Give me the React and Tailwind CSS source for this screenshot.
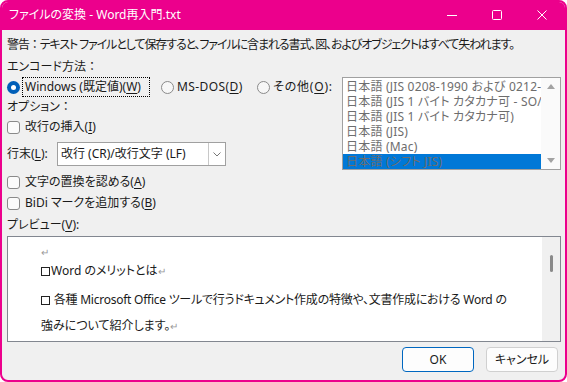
import React from 'react'

const PINK = 'border-[#ec008c]'

function Radio({ checked }) {
  if (checked) {
    return (
      <span className="w-[13px] h-[13px] rounded-full bg-[#005fb8] flex items-center justify-center shrink-0">
        <span className="w-[5px] h-[5px] rounded-full bg-white" />
      </span>
    )
  }
  return <span className="block w-[13px] h-[13px] rounded-full border border-[#8a8a8a] bg-[#f7f7f7] shrink-0" />
}

function Check({ children }) {
  return (
    <div className="flex items-center h-[16px] gap-[5px]">
      <span className="w-[13px] h-[13px] rounded-[3px] border border-[#8a8a8a] bg-[#fbfbfb] shrink-0" />
      <span>{children}</span>
    </div>
  )
}

function Key({ k }) {
  return <span className="underline underline-offset-2">{k}</span>
}

// full-width colon, kept out of the proportional (palt) spacing
function Colon() {
  return <span className="[font-feature-settings:normal]">：</span>
}

function Box() {
  return <span className="inline-block w-[9px] h-[9px] border-[1.5px] border-[#222] mr-[1px] align-[-1px]" />
}

function Ret() {
  return <span className="text-[#9a9a9a] text-[10px]">↵</span>
}

export default function App() {
  const encodings = [
    '日本語 (JIS 0208-1990 および 0212-1990)',
    '日本語 (JIS 1 バイト カタカナ可 - SO/SI)',
    '日本語 (JIS 1 バイト カタカナ可)',
    '日本語 (JIS)',
    '日本語 (Mac)',
    '日本語 (シフト JIS)',
  ]

  return (
    <div className="w-[567px] h-[382px] bg-white font-['Noto_Sans','Noto_Sans_CJK_JP',sans-serif] [font-feature-settings:'palt'] text-[12px] text-[#1a1a1a]">
      <div className={`w-full h-full rounded-[8px] border-2 ${PINK} bg-[#f0f0f0] overflow-hidden flex flex-col`}>
        {/* title bar */}
        <div className="h-[28px] bg-[#ec008c] flex items-center shrink-0">
          <div className="pl-[7px] text-white leading-[16px] mt-[-2px]">ファイルの変換 - Word再入門.txt</div>
          <div className="ml-auto flex h-full pr-[1px] mt-[-2px]">
            <div className="w-[45px] flex items-center justify-center">
              <svg width="10" height="10" viewBox="0 0 10 10"><path d="M0 5.5h10" stroke="white" strokeWidth="1" /></svg>
            </div>
            <div className="w-[45px] flex items-center justify-center">
              <svg width="10" height="10" viewBox="0 0 10 10"><rect x="0.5" y="0.5" width="9" height="9" rx="1" fill="none" stroke="white" strokeWidth="1" /></svg>
            </div>
            <div className="w-[45px] flex items-center justify-center">
              <svg width="10" height="10" viewBox="0 0 10 10"><path d="M0.5 0.5l9 9M9.5 0.5l-9 9" stroke="white" strokeWidth="1" /></svg>
            </div>
          </div>
        </div>

        {/* body */}
        <div className="pl-[5px] pr-[4px] flex flex-col">
          <div className="mt-[7px] h-[16px] leading-[16px] whitespace-nowrap tracking-[-1.1px]">
            警告<Colon />テキスト ファイルとして保存すると、ファイルに含まれる書式、図、およびオブジェクトはすべて失われます。
          </div>
          <div className="mt-[6px] h-[16px] leading-[16px]">エンコード方法<Colon /></div>

          <div className="mt-[2px] flex">
            <div className="flex-1 flex flex-col">
              <div className="h-[20px] flex items-center whitespace-nowrap">
                <Radio checked />
                <span className="ml-[2px] w-[128px] h-[20px] pl-[2px] border border-dotted border-black flex items-center">
                  Windows (既定値)(<Key k="W" />)
                </span>
                <span className="ml-[11px]"><Radio /></span>
                <span className="ml-[3px] w-[80px] tracking-[0.4px]">MS-DOS(<Key k="D" />)</span>
                <span><Radio /></span>
                <span className="ml-[3px] tracking-[0.8px]">その他(<Key k="O" />):</span>
              </div>
              <div className="mt-[2px] h-[16px] leading-[16px]">オプション<Colon /></div>
              <div className="mt-[4px]"><Check>改行の挿入(<Key k="I" />)</Check></div>
              <div className="mt-[7px] flex items-center h-[24px]">
                <span className="w-[50px]">行末(<Key k="L" />):</span>
                <div className="w-[169px] h-[24px] border border-[#a0a0a0] bg-white flex items-center">
                  <span className="flex-1 pl-[3px]">改行 (CR)/改行文字 (LF)</span>
                  <span className="w-[17px] h-full border-l border-[#c8c8c8] flex items-center justify-center">
                    <svg width="8" height="5" viewBox="0 0 8 5"><path d="M0.5 0.5L4 4L7.5 0.5" fill="none" stroke="#777" strokeWidth="1" /></svg>
                  </span>
                </div>
              </div>
            </div>

            {/* encoding list */}
            <div className="w-[219px] h-[93px] border border-[#a0a0a0] bg-white flex">
              <div className="flex-1 overflow-hidden pt-[1px] text-[#6d6d6d] tracking-[0.2px]">
                {encodings.map((e, i) => (
                  <div
                    key={e}
                    className={`h-[15px] leading-[15px] pl-[3px] whitespace-nowrap ${i === 5 ? 'bg-[#0078d7]' : ''}`}
                  >{e}</div>
                ))}
              </div>
              <div className="w-[19px] bg-[#fafafa] flex flex-col items-center justify-between py-[6px]">
                <svg width="8" height="5" viewBox="0 0 8 5"><path d="M0 5L4 0L8 5Z" fill="#a3a3a3" /></svg>
                <svg width="8" height="5" viewBox="0 0 8 5"><path d="M0 0L4 5L8 0Z" fill="#a3a3a3" /></svg>
              </div>
            </div>
          </div>

          <div className="mt-[4px]"><Check>文字の置換を認める(<Key k="A" />)</Check></div>
          <div className="mt-[5px]"><Check>BiDi マークを追加する(<Key k="B" />)</Check></div>
          <div className="mt-[6px] h-[16px] leading-[16px]">プレビュー(<Key k="V" />):</div>

          {/* preview */}
          <div className="mt-[3px] h-[106px] border border-[#828790] bg-white flex">
            <div className="flex-1 pl-[33px] pt-[7px] whitespace-nowrap">
              <div className="h-[16px] leading-[16px]"><Ret /></div>
              <div className="mt-[3px] h-[16px] leading-[16px]"><Box />Word のメリットとは<Ret /></div>
              <div className="mt-[13px] h-[16px] leading-[16px] tracking-[-0.25px]">
                <Box /> 各種 Microsoft Office ツールで行うドキュメント作成の特徴や、文書作成における Word の
              </div>
              <div className="mt-[10px] h-[16px] leading-[16px]">強みについて紹介します。<Ret /></div>
            </div>
            <div className="w-[18px] bg-[#f0f0f0] flex justify-center pt-[18px]">
              <span className="w-[3px] h-[17px] rounded-full bg-[#8a8a8a]" />
            </div>
          </div>

          {/* buttons */}
          <div className="mt-[5px] flex justify-end gap-[12px] pr-[3px]">
            <button className="w-[72px] h-[25px] rounded-[4px] border border-[#0067c0] bg-[#fdfdfd]">OK</button>
            <button className="w-[72px] h-[25px] rounded-[4px] border border-[#d0d0d0] bg-[#fdfdfd]">キャンセル</button>
          </div>
        </div>
      </div>
    </div>
  )
}
